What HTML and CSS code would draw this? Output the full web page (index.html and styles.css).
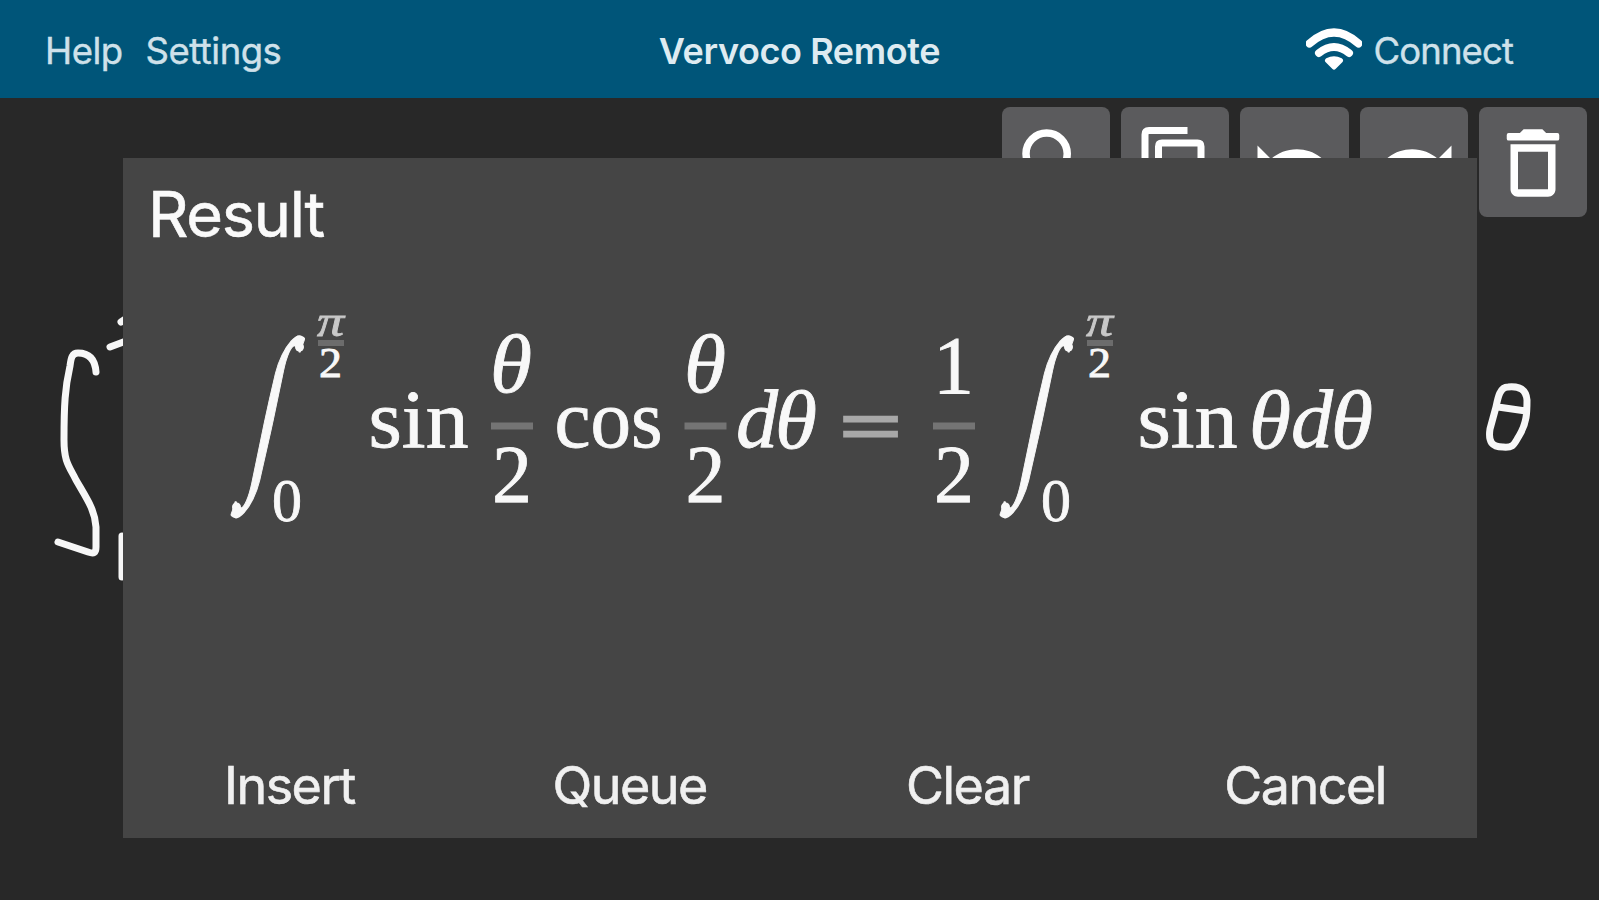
FILE: index.html
```html
<!DOCTYPE html>
<html lang="en">
<head>
<meta charset="utf-8">
<title>Vervoco Remote</title>
<link rel="stylesheet" href="styles.css">
</head>
<body>
<div class="app">
  <header class="bar">
    <nav class="bar-left"><a class="help">Help</a><a class="settings">Settings</a></nav>
    <h1 class="bar-title">Vervoco Remote</h1>
    <div class="bar-right">
      <svg class="wifi" viewBox="0 0 56 42" fill="none" stroke="#fff">
        <path d="M3.5 15.500Q28 -6.500 52.500 15.500" stroke-width="8" stroke-linecap="round"/>
        <path d="M13 25Q28 13 43 25" stroke-width="8" stroke-linecap="round"/>
        <path d="M21.500 32.500Q28 29 34.500 32.500L28 39Z" fill="#fff" stroke-width="5" stroke-linejoin="round"/>
      </svg>
      <span class="connect">Connect</span>
    </div>
  </header>
  <main class="stage">
    <svg class="ink" viewBox="0 98 1599 802">
      <path d="M96 372C95 358 88 353 78 353C72 353 71 358 70 366C65 388 64 405 64 440C64 462 69 466 76 480C87 499 95 510 96 527V547C96 553 94 554 88 552L58 542"/>
      <path d="M110 347L126 341M121 322L127 318M122 536V577"/>
      <path d="M1508 387C1500 387 1498 397 1496 407L1490 429C1488 442 1492 447 1503 447C1514 448 1514 444 1519 436C1527 423 1527 412 1527 400C1526 389 1519 386 1508 387ZM1498 407L1526 411"/>
    </svg>
    <div class="tools">
      <button class="tool"><svg viewBox="0 0 24 24"><path d="M15.500 14h-.79l-.28-.27A6.471 6.471 0 0 0 16 9.500 6.500 6.500 0 1 0 9.500 16c1.610 0 3.090-.59 4.230-1.570l.27.28v.79l5 4.990L20.490 19l-4.990-5zm-6 0C7.010 14 5 11.990 5 9.500S7.010 5 9.500 5 14 7.010 14 9.500 11.990 14 9.500 14z"/></svg></button>
      <button class="tool"><svg viewBox="0 0 90 90"><path d="M15 58V16.500Q15 12.500 19 12.500H57.500M28.500 28.500Q28.500 25 32 25H67.500Q71 25 71 28.500V68Q71 72 67.500 72H32Q28.500 72 28.500 68Z" fill="none" stroke="#fff" stroke-width="7"/></svg></button>
      <button class="tool"><svg viewBox="0 -.3 24 24"><path d="M12.500 8c-2.650 0-5.050.99-6.900 2.600L2 7v9h9l-3.620-3.620c1.390-1.160 3.160-1.880 5.120-1.880 3.540 0 6.550 2.310 7.600 5.500l2.370-.78C21.080 11.030 17.150 8 12.500 8z"/></svg></button>
      <button class="tool"><svg viewBox="0 -.3 24 24"><path d="M18.400 10.600C16.550 8.990 14.150 8 11.500 8c-4.650 0-8.580 3.030-9.960 7.220L3.900 16c1.050-3.190 4.050-5.500 7.600-5.500 1.950 0 3.730.72 5.120 1.880L13 16h9V7l-3.600 3.600z"/></svg></button>
      <button class="tool"><svg viewBox="0 0 24 24"><path fill-rule="evenodd" d="M6 19c0 1.100.9 2 2 2h8c1.100 0 2-.9 2-2V7H6v12zM8 9h8v10H8V9zm7.500-5l-1-1h-5l-1 1H5.500q-.5 0-.5.500v1q0 .5.500.5h13q.5 0 .5-.5v-1q0-.5-.5-.5z"/></svg></button>
    </div>
    <section class="dialog">
      <h2 class="dialog-title">Result</h2>
      <svg class="formula" viewBox="123 298 1354 250">
        <defs>
          <g id="integral">
            <text class="int" transform="translate(246 468) skewX(-12) scale(.6 1.155)">∫</text>
            <circle cx="299.500" cy="347" r="4.500"/>
            <circle cx="236.500" cy="507" r="4.500"/>
            <text x="272" y="521" font-size="61" textLength="30" lengthAdjust="spacingAndGlyphs">0</text>
            <text class="pi" x="317" y="336" font-size="44" textLength="27" lengthAdjust="spacingAndGlyphs">π</text>
            <rect x="318" y="340" width="26" height="6" fill="#6c6c6c"/>
            <text x="319" y="377" font-size="42" textLength="23" lengthAdjust="spacingAndGlyphs">2</text>
          </g>
          <g id="half">
            <rect x="0" y="422.500" width="42" height="7" fill="#747474"/>
            <text x="1" y="502" textLength="40" lengthAdjust="spacingAndGlyphs">2</text>
          </g>
        </defs>
        <use href="#integral"/>
        <text x="368.500" y="447" textLength="100" lengthAdjust="spacingAndGlyphs">sin</text>
        <text class="it" x="490" y="392" textLength="42" lengthAdjust="spacingAndGlyphs">θ</text>
        <use href="#half" x="491"/>
        <text x="554.500" y="447" textLength="108" lengthAdjust="spacingAndGlyphs">cos</text>
        <text class="it" x="684" y="392" textLength="42" lengthAdjust="spacingAndGlyphs">θ</text>
        <use href="#half" x="684.500"/>
        <text class="it" x="736" y="447" textLength="42" lengthAdjust="spacingAndGlyphs">d</text>
        <text class="it" x="775" y="448" textLength="42" lengthAdjust="spacingAndGlyphs">θ</text>
        <text class="eq" x="840" y="451" textLength="61" lengthAdjust="spacingAndGlyphs">=</text>
        <text x="933" y="393" textLength="41" lengthAdjust="spacingAndGlyphs">1</text>
        <use href="#half" x="933"/>
        <use href="#integral" x="769"/>
        <text x="1137.500" y="447" textLength="100" lengthAdjust="spacingAndGlyphs">sin</text>
        <text class="it" x="1249" y="448" textLength="42" lengthAdjust="spacingAndGlyphs">θ</text>
        <text class="it" x="1291" y="447" textLength="42" lengthAdjust="spacingAndGlyphs">d</text>
        <text class="it" x="1331" y="448" textLength="42" lengthAdjust="spacingAndGlyphs">θ</text>
      </svg>
      <div class="actions"><a>Insert</a><a>Queue</a><a>Clear</a><a>Cancel</a></div>
    </section>
  </main>
</div>
</body>
</html>
```
FILE: styles.css
```css
* { box-sizing: border-box; }
body { margin: 0; font-family: Inter, "Liberation Sans", sans-serif; color: #f2f2f2; background: #282828; }
.app { width: 1599px; height: 900px; display: flex; flex-direction: column; overflow: hidden; }
.bar { height: 98px; flex: none; display: grid; grid-template-columns: 1fr auto 1fr; align-items: center; padding: 3px 86px 0 45px; background: #005579; color: #cfe1ea; font-size: 36.500px; line-height: 44px; }
.bar-left { display: flex; gap: 23px; letter-spacing: -0.5px; -webkit-text-stroke: 0.4px; }
.bar-title { margin: 0; font-size: 36px; font-weight: 600; letter-spacing: -0.4px; color: #deebf1; transform: translateX(20.500px); }
.bar-right { display: flex; justify-content: flex-end; align-items: center; gap: 12px; letter-spacing: -0.9px; -webkit-text-stroke: 0.4px; }
.wifi { width: 56px; height: 42px; margin-top: -4px; }
.stage { position: relative; flex: 1; }
.ink { position: absolute; left: 0; top: 0; width: 1599px; height: 802px; fill: none; stroke: #f7f7f7; stroke-width: 7; stroke-linecap: round; stroke-linejoin: round; }
.tools { display: flex; justify-content: flex-end; gap: 11px; padding: 9px 12px 0 0; }
.tool { width: 108.200px; height: 110px; padding: 2px 0 0; border: 0; border-radius: 8px; background: #5b5b5d; display: grid; place-items: center; }
.tool svg { width: 90px; height: 90px; fill: #fff; }
.dialog { position: absolute; left: 123px; top: 60px; width: 1354px; height: 680px; background: #454545; display: flex; flex-direction: column; }
.dialog-title { margin: 17px 0 0 25px; font-size: 63px; line-height: 78px; font-weight: 400; letter-spacing: -1.300px; color: #fafafa; -webkit-text-stroke: 0.6px; }
.formula { width: 1354px; height: 250px; margin-top: 45px; font-family: "Liberation Serif", serif; font-size: 82px; fill: #f8f8f8; stroke: #f8f8f8; stroke-width: 0.8px; }
.formula rect, .formula circle { stroke: none; }
.it { font-style: italic; }
.pi { font-style: italic; fill: #c8c8c8; stroke: #c8c8c8; }
.int { font-size: 160px; stroke-width: 1.500px; }
.eq { font-size: 74px; fill: #a8a8a8; stroke: #a8a8a8; stroke-width: 3px; }
.actions { margin: auto 3px 0 0; height: 104px; display: grid; grid-template-columns: repeat(4, 1fr); text-align: center; font-size: 52px; line-height: 104px; letter-spacing: -1.500px; color: #f0f0f0; -webkit-text-stroke: 0.6px; }
.actions a:first-child { padding-right: 5px; }
```
